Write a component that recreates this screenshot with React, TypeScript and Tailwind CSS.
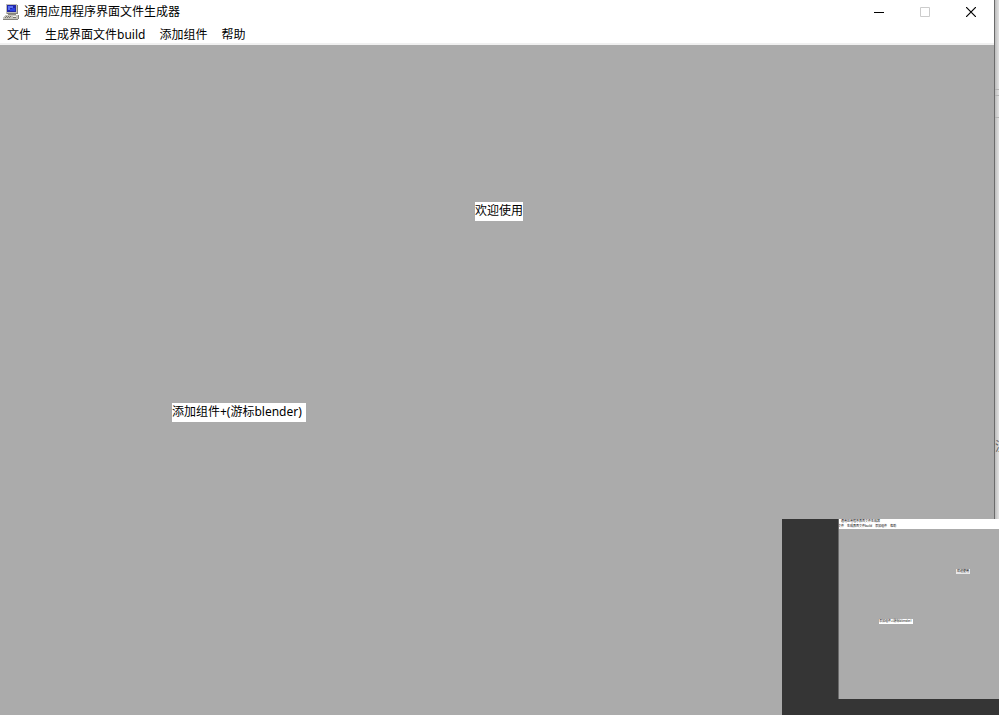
import type { ReactNode } from "react";

const TITLE = "通用应用程序界面文件生成器";
const MENUS = ["文件", "生成界面文件build", "添加组件", "帮助"];

function AppIcon() {
  return (
    <svg viewBox="0 0 16 16" className="h-4 w-4 shrink-0" shapeRendering="crispEdges" aria-hidden="true">
      <path d="M3 0h11v10H3z" fill="#bfbdb6" />
      <path d="M14 1h1v9H4V9h10z" fill="#85837b" />
      <path d="M4 1h9v7H4z" fill="#2228a8" />
      <path d="M5 2h5v2H7v2H5z" fill="#5a70f4" />
      <path d="M9 4h3v3H7V5h2z" fill="#2a40e0" />
      <path d="M5 10h8v1H5z" fill="#8f8d86" />
      <path d="M2 11h13v4H0v-2z" fill="#c6c4bb" />
      <path d="M0 15h15v1H0zM15 11h1v4h-1z" fill="#85837b" />
      <path d="M3 12h1v1H3zM5 12h1v1H5zM7 12h1v1H7zM2 13h1v1H2zM4 13h1v1H4zM6 13h1v1H6z" fill="#77756e" />
      <path d="M10 12h3v1h-3z" fill="#f2f1ea" />
      <path d="M10 13h3v1h-3z" fill="#77756e" />
    </svg>
  );
}

function CaptionButton({ label, disabled, children }: { label: string; disabled?: boolean; children: ReactNode }) {
  return (
    <button
      type="button"
      aria-label={label}
      disabled={disabled}
      className={disabled ? "grid h-6 w-[46px] place-items-center text-[#cccccc]" : "grid h-6 w-[46px] place-items-center text-black"}
    >
      <svg viewBox="0 0 10 10" className="h-2.5 w-2.5" fill="none" stroke="currentColor">
        {children}
      </svg>
    </button>
  );
}

function Preview() {
  return (
    <aside className="absolute right-0 bottom-0 flex h-[196px] w-[217px] bg-[#353535] pb-4 pl-14">
      <div className="flex flex-1 flex-col overflow-hidden border-l border-[#6b6b6b] bg-[#ababab] text-[3px] leading-[4px] text-black">
        <div className="h-[10px] shrink-0 bg-white">
          <div className="pl-0.5">{TITLE}</div>
          <div className="-ml-px flex gap-[3px] pt-px whitespace-nowrap">
            {MENUS.map((m) => (
              <span key={m}>{m}</span>
            ))}
          </div>
        </div>
        <div className="relative flex-1">
          <span className="absolute top-10 left-[117px] bg-[#e8e8e8] px-px leading-[5px] whitespace-nowrap">欢迎使用</span>
          <span className="absolute top-[90px] left-10 w-[34px] bg-white leading-[5px] whitespace-nowrap">添加组件+(游标blender)</span>
        </div>
      </div>
    </aside>
  );
}

export default function App() {
  return (
    <div className="relative flex h-screen overflow-hidden bg-[#d4d4d4] font-['Noto_Sans','Noto_Sans_CJK_SC',sans-serif] text-xs text-black">
      <main className="flex min-w-0 flex-1 flex-col border-r border-[#6b6b6b] bg-[#ababab]">
        <header className="flex h-6 shrink-0 items-center justify-between bg-white pl-[3px]">
          <div className="flex items-center gap-[5px]">
            <AppIcon />
            <h1 className="leading-6">{TITLE}</h1>
          </div>
          <div className="flex">
            <CaptionButton label="最小化">
              <path d="M0 5.5h10" stroke="#000" />
            </CaptionButton>
            <CaptionButton label="最大化" disabled>
              <path d="M.5.5h9v9h-9z" />
            </CaptionButton>
            <CaptionButton label="关闭">
              <path d="M0 0l10 10M10 0L0 10" strokeWidth="1.2" />
            </CaptionButton>
          </div>
        </header>
        <nav className="flex h-[21px] shrink-0 items-center border-b-2 border-[#f0f0f0] bg-white pt-0.5">
          {MENUS.map((m) => (
            <button key={m} type="button" className="px-[7px] leading-5">
              {m}
            </button>
          ))}
        </nav>
        <section className="relative flex-1">
          <span className="absolute top-[157px] left-[475px] h-[19px] bg-white leading-[18px]">欢迎使用</span>
          <span className="absolute top-[358px] left-[172px] h-[19px] w-[134px] bg-white leading-[18px] whitespace-nowrap">添加组件+(游标blender)</span>
        </section>
      </main>
      <div className="w-1 shrink-0 overflow-hidden bg-linear-to-r from-[#bdbdbd] to-[#e2e2e2]">
        <div className="h-[90px] border-b border-[#b4b4b4]" />
        <div className="h-1.5 border-b border-[#b4b4b4]" />
        <div className="h-[22px] border-b border-[#b4b4b4]" />
        <div className="pt-[320px] leading-[18px] text-[#666666]">注</div>
      </div>
      <Preview />
    </div>
  );
}
